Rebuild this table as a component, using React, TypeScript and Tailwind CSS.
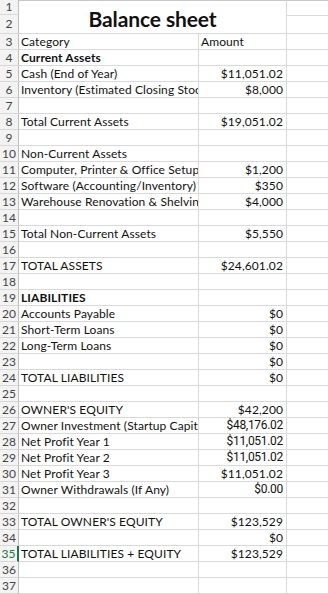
const rows: { n: number; label?: string; value?: string; bold?: boolean; alt?: boolean }[] = [
  { n: 3, label: "Category", value: "Amount" },
  { n: 4, label: "Current Assets", bold: true },
  { n: 5, label: "Cash (End of Year)", value: "$11,051.02" },
  { n: 6, label: "Inventory (Estimated Closing Stock)", value: "$8,000" },
  { n: 7 },
  { n: 8, label: "Total Current Assets", value: "$19,051.02" },
  { n: 9 },
  { n: 10, label: "Non-Current Assets" },
  { n: 11, label: "Computer, Printer & Office Setup", value: "$1,200" },
  { n: 12, label: "Software (Accounting/Inventory)", value: "$350" },
  { n: 13, label: "Warehouse Renovation & Shelving", value: "$4,000" },
  { n: 14 },
  { n: 15, label: "Total Non-Current Assets", value: "$5,550" },
  { n: 16 },
  { n: 17, label: "TOTAL ASSETS", value: "$24,601.02" },
  { n: 18 },
  { n: 19, label: "LIABILITIES", bold: true },
  { n: 20, label: "Accounts Payable", value: "$0" },
  { n: 21, label: "Short-Term Loans", value: "$0" },
  { n: 22, label: "Long-Term Loans", value: "$0" },
  { n: 23, value: "$0" },
  { n: 24, label: "TOTAL LIABILITIES", value: "$0" },
  { n: 25 },
  { n: 26, label: "OWNER'S EQUITY", value: "$42,200" },
  { n: 27, label: "Owner Investment (Startup Capital)", value: "$48,176.02", alt: true },
  { n: 28, label: "Net Profit Year 1", value: "$11,051.02", alt: true },
  { n: 29, label: "Net Profit Year 2", value: "$11,051.02", alt: true },
  { n: 30, label: "Net Profit Year 3", value: "$11,051.02" },
  { n: 31, label: "Owner Withdrawals (If Any)", value: "$0.00", alt: true },
  { n: 32 },
  { n: 33, label: "TOTAL OWNER'S EQUITY", value: "$123,529" },
  { n: 34, value: "$0" },
  { n: 35, label: "TOTAL LIABILITIES + EQUITY", value: "$123,529" },
  { n: 36 },
  { n: 37 },
];

function RowHead({ n, h }: { n: number; h: string }) {
  const active = n === 35;
  return (
    <div
      className={`${h} w-[19px] shrink-0 flex items-center justify-center bg-[#f3f3f3] border-b border-[#d9d9d9] text-[12px] leading-none ${
        active ? "text-[#217346] border-r-2 border-r-[#217346]" : "text-[#444] border-r border-r-[#bfbfbf]"
      }`}
    >
      {n}
    </div>
  );
}

export default function App() {
  return (
    <div className="w-[328px] h-[594px] overflow-hidden bg-white font-['Lato',sans-serif] text-[12px] tracking-[0.1px] text-[#111]">
      {/* rows 1-2, title merged over A:B */}
      <div className="flex h-[34px]">
        <div className="flex flex-col">
          <RowHead n={1} h="h-[15px]" />
          <RowHead n={2} h="h-[19px]" />
        </div>
        <div className="w-[268px] shrink-0 flex items-end justify-center pb-[4px] border-r border-b border-[#d9d9d9] border-t border-t-[#c8c8c8]">
          <span className="text-[21px] font-bold leading-none tracking-[-0.1px]">Balance sheet</span>
        </div>
        <div className="flex-1 flex flex-col border-t border-t-[#c8c8c8]">
          <div className="h-[15px] border-b border-[#d9d9d9]" />
          <div className="h-[18px] border-b border-[#d9d9d9]" />
        </div>
      </div>

      {rows.map((r) => (
        <div key={r.n} className="flex h-[16px]">
          <RowHead n={r.n} h="h-[16px]" />
          <div
            className={`w-[180px] shrink-0 border-r border-b border-[#d9d9d9] pl-[2px] overflow-hidden whitespace-nowrap leading-[15px] ${
              r.bold ? "font-bold" : ""
            }`}
          >
            {r.label}
          </div>
          <div
            className={`w-[88px] shrink-0 border-r border-b border-[#d9d9d9] overflow-hidden whitespace-nowrap leading-[15px] ${
              r.n === 3 ? "pl-[2px] text-left" : "pr-[3px] text-right"
            } ${r.alt ? "font-['Roboto',sans-serif] tracking-[-0.3px]" : ""}`}
          >
            {r.value}
          </div>
          <div className="flex-1 border-b border-[#d9d9d9]" />
        </div>
      ))}
    </div>
  );
}
